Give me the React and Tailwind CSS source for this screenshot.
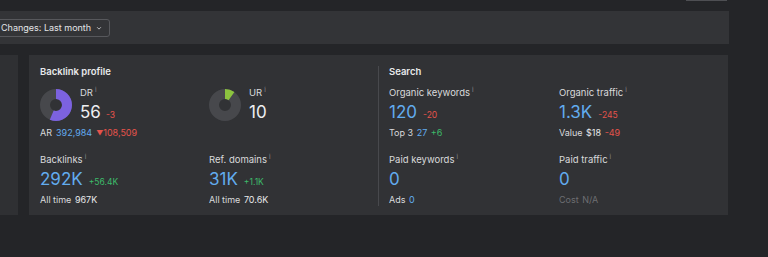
import React from 'react';

function Donut({ value, color }) {
  const r = 11;
  const c = 2 * Math.PI * r;
  return (
    <svg width="32" height="32" viewBox="0 0 32 32" className="shrink-0 mt-[3px]">
      <circle cx="16" cy="16" r={r} fill="none" stroke="#47484c" strokeWidth="10" />
      <circle
        cx="16"
        cy="16"
        r={r}
        fill="none"
        stroke={color}
        strokeWidth="10"
        strokeDasharray={`${(c * value) / 100} ${c}`}
        transform="rotate(-90 16 16)"
      />
    </svg>
  );
}

function Label({ children }) {
  return (
    <div className="flex items-start h-[14px] text-[9.5px] leading-[14px] text-[#d9dadc]">
      {children}
      <span className="ml-[2px] -mt-[3px] text-[6.5px] text-[#8a8b8f]">i</span>
    </div>
  );
}

function Metric({ label, value, delta, deltaColor, sub }) {
  return (
    <div className="w-[170px] flex flex-col">
      <Label>{label}</Label>
      <div className="mt-[2px] h-[20px] flex items-baseline gap-[6px]">
        <span className="text-[17px] leading-[20px] text-[#62acef]">{value}</span>
        {delta && <span className={`text-[8.5px] ${deltaColor}`}>{delta}</span>}
      </div>
      <div className="mt-[4px] h-[14px] text-[9px] leading-[14px] text-[#d9dadc]">{sub}</div>
    </div>
  );
}

export default function App() {
  return (
    <div className="w-[768px] h-[257px] overflow-hidden bg-[#242528] font-['Inter',sans-serif]">
      {/* top strip */}
      <div className="h-[11px] flex justify-end pr-[41px]">
        <div className="w-[41px] h-px bg-[#4e4f53]" />
      </div>

      {/* filter bar */}
      <div className="w-[729px] h-[33px] bg-[#333437] flex items-center">
        <button className="-ml-[10px] mt-px h-[18px] pl-[10px] pr-[7px] flex items-center gap-[4px] border border-[#57585c] rounded-[3px] text-[9px] text-[#e4e5e7]">
          Changes: Last month
          <svg width="6" height="6" viewBox="0 0 8 8" className="ml-[1px]">
            <path d="M1.5 3 L4 5.5 L6.5 3" fill="none" stroke="#c8c9cc" strokeWidth="1.2" />
          </svg>
        </button>
      </div>

      {/* cards */}
      <div className="mt-[11px] flex gap-[11px] h-[160px]">
        <div className="w-[18px] bg-[#2f3033]" />
        <div className="w-[699px] bg-[#313235] flex pt-[11px] pb-[9px]">
          {/* Backlink profile */}
          <div className="w-[350px] pl-[11px] border-r border-[#48494d]">
            <div className="text-[9.5px] font-semibold leading-[12px] text-[#e8e9eb]">Backlink profile</div>
            <div className="mt-[8px] flex">
              <div className="w-[169px] flex flex-col">
                <div className="flex gap-[8px]">
                  <Donut value={56} color="#7c62e0" />
                  <div className="flex flex-col">
                    <Label>DR</Label>
                    <div className="mt-[2px] h-[20px] flex items-baseline gap-[5px]">
                      <span className="text-[17px] leading-[20px] text-[#eeeff1]">56</span>
                      <span className="text-[8.5px] text-[#e5534b]">-3</span>
                    </div>
                  </div>
                </div>
                <div className="mt-[4px] h-[14px] flex items-center text-[9px] leading-[14px] text-[#d9dadc]">
                  AR
                  <span className="ml-[4px] text-[#62acef]">392,984</span>
                  <span className="ml-[4px] text-[#e5534b]">
                    <span className="text-[7px]">▼</span>108,509
                  </span>
                </div>
              </div>
              <div className="flex gap-[8px]">
                <Donut value={10} color="#8cc43f" />
                <div className="flex flex-col">
                  <Label>UR</Label>
                  <span className="mt-[2px] text-[17px] leading-[20px] text-[#eeeff1]">10</span>
                </div>
              </div>
            </div>
            <div className="mt-[13px] flex">
              <Metric
                label="Backlinks"
                value="292K"
                delta="+56.4K"
                deltaColor="text-[#3dbb6a]"
                sub={<span>All time <span className="ml-[1px] text-[#e8e9eb]">967K</span></span>}
              />
              <Metric
                label="Ref. domains"
                value="31K"
                delta="+1.1K"
                deltaColor="text-[#3dbb6a]"
                sub={<span>All time <span className="ml-[1px] text-[#e8e9eb]">70.6K</span></span>}
              />
            </div>
          </div>

          {/* Search */}
          <div className="pl-[10px]">
            <div className="text-[9.5px] font-semibold leading-[12px] text-[#e8e9eb]">Search</div>
            <div className="mt-[8px] flex">
              <Metric
                label="Organic keywords"
                value="120"
                delta="-20"
                deltaColor="text-[#e5534b]"
                sub={
                  <span>
                    Top 3 <span className="ml-[1px] text-[#62acef]">27</span>{' '}
                    <span className="ml-[1px] text-[#3dbb6a]">+6</span>
                  </span>
                }
              />
              <Metric
                label="Organic traffic"
                value="1.3K"
                delta="-245"
                deltaColor="text-[#e5534b]"
                sub={
                  <span>
                    Value <span className="ml-[1px] text-[#e8e9eb]">$18</span>{' '}
                    <span className="ml-[1px] text-[#e5534b]">-49</span>
                  </span>
                }
              />
            </div>
            <div className="mt-[13px] flex">
              <Metric
                label="Paid keywords"
                value="0"
                sub={<span>Ads <span className="ml-[1px] text-[#62acef]">0</span></span>}
              />
              <Metric
                label="Paid traffic"
                value="0"
                sub={<span className="text-[#6d6e72]">Cost <span className="ml-[1px]">N/A</span></span>}
              />
            </div>
          </div>
        </div>
      </div>
    </div>
  );
}
